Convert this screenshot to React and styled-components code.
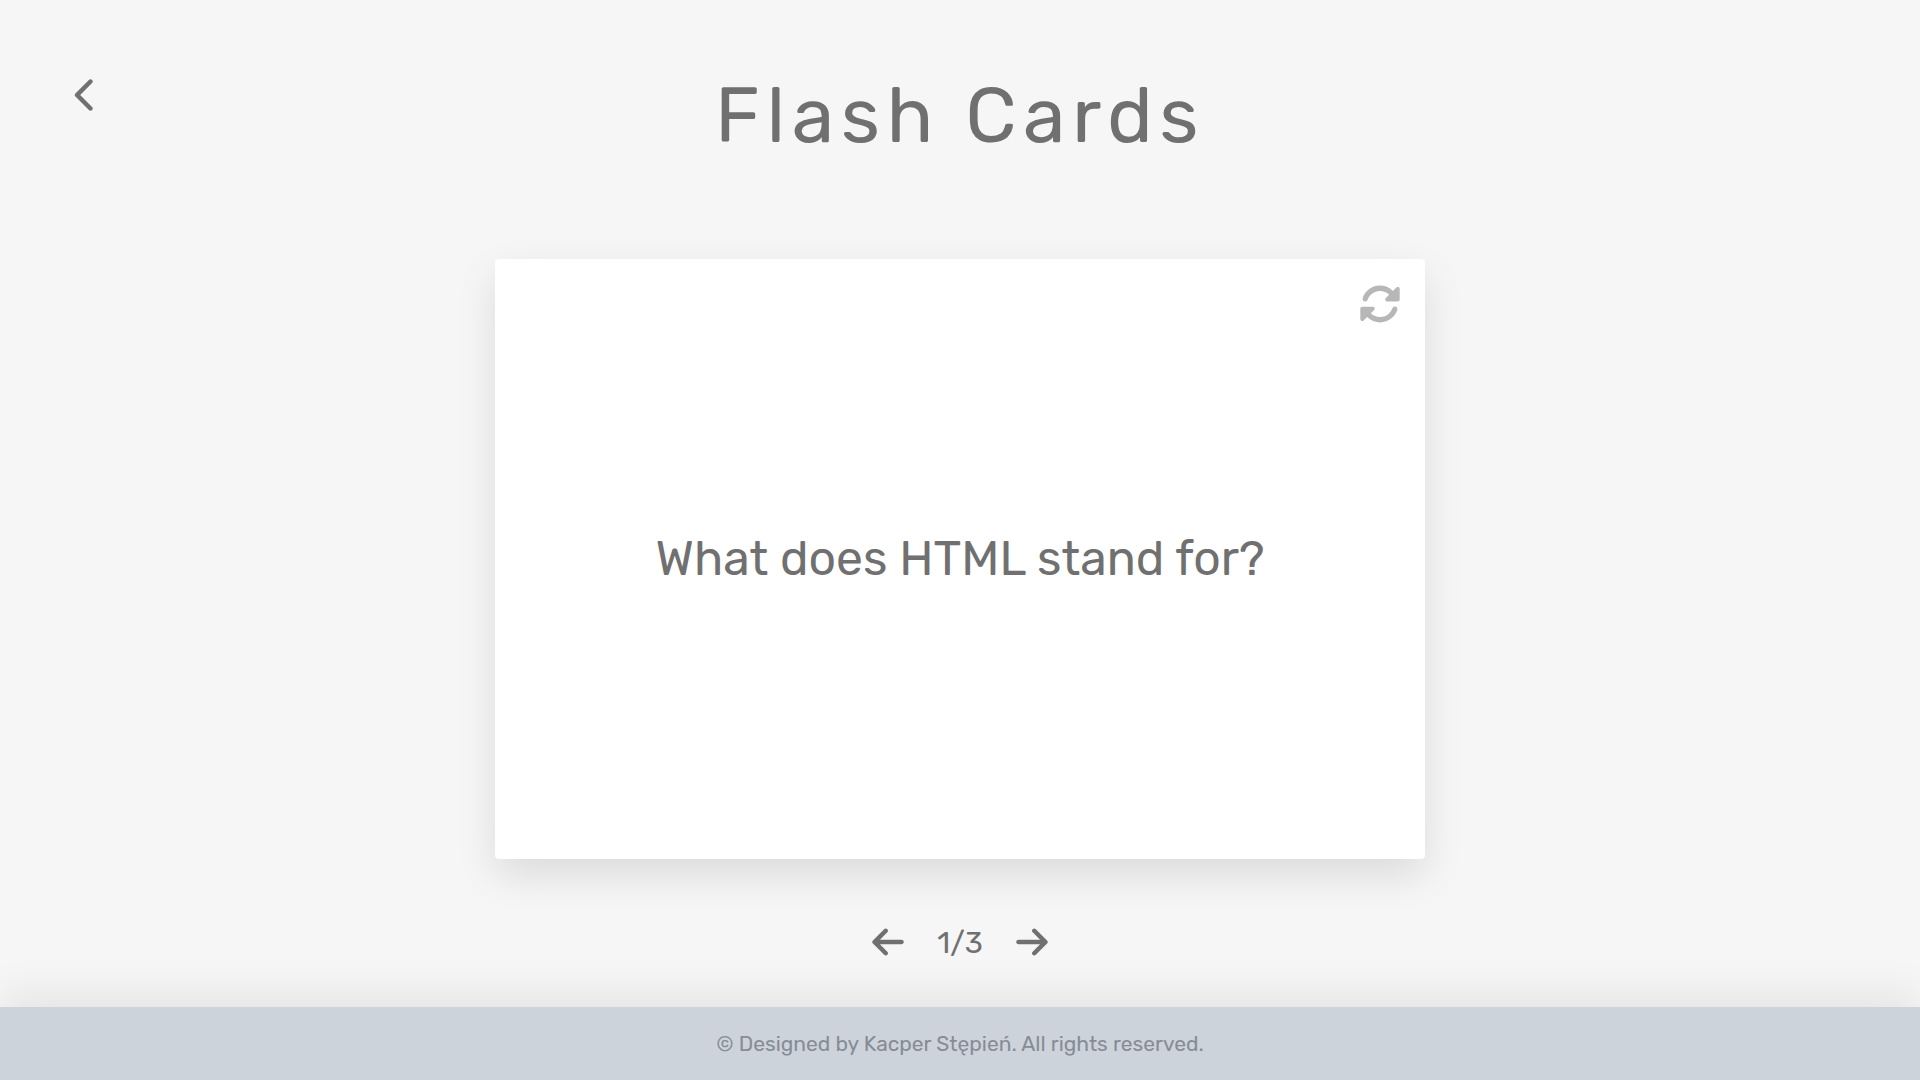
import React, { useState } from "react";
import styled, { createGlobalStyle } from "styled-components";
import { FaChevronLeft, FaArrowLeft, FaArrowRight, FaRotate } from "react-icons/fa6";

const GlobalStyle = createGlobalStyle`
  *, *::before, *::after { box-sizing: border-box; }
  body {
    margin: 0;
    background: #f6f6f6;
    color: #707070;
    font-family: Rubik, Inter, Roboto, sans-serif;
  }
`;

const Page = styled.div`
  display: flex;
  flex-direction: column;
  height: 100vh;
  overflow: hidden;
`;

const Header = styled.header`
  display: grid;
  grid-template-columns: 168px 1fr 168px;
  height: 259px;
  flex: none;
`;

const IconButton = styled.button`
  display: flex;
  align-items: center;
  justify-content: center;
  padding: 0;
  border: 0;
  background: none;
  color: ${({ $tone }) => $tone || "#707070"};
  font-size: ${({ $size }) => $size}px;
  cursor: pointer;
`;

const BackButton = styled(IconButton)`
  align-self: start;
  height: 40px;
  margin-top: 75.4px;
  padding-left: 4px;
`;

const Title = styled.h1`
  margin: 68px 0 0;
  font-size: 77px;
  font-weight: 400;
  line-height: 96px;
  letter-spacing: 6.5px;
  text-align: center;
  white-space: nowrap;
`;

const Main = styled.main`
  display: flex;
  flex: 1;
  flex-direction: column;
  align-items: center;
`;

const Card = styled.section`
  display: flex;
  flex-direction: column;
  width: 930px;
  height: 600px;
  border-radius: 4px;
  background: #fff;
  box-shadow: 0 16px 40px rgba(0, 0, 0, 0.11);
`;

const CardTools = styled.div`
  display: flex;
  justify-content: flex-end;
  height: 90px;
  padding: 25px 24px 25px 0;
`;

const Question = styled.p`
  display: flex;
  flex: 1;
  align-items: center;
  justify-content: center;
  margin: 0;
  padding-bottom: 92px;
  font-size: 48px;
  white-space: nowrap;
`;

const Pager = styled.nav`
  display: flex;
  align-items: center;
  gap: 30px;
  height: 40px;
  margin-top: 62.5px;
`;

const Count = styled.span`
  width: 48px;
  padding-top: 3px;
  font-size: 30px;
  text-align: center;
`;

const Footer = styled.footer`
  display: flex;
  flex: none;
  align-items: center;
  justify-content: center;
  height: 73px;
  background: #cdd3db;
  color: #868c95;
  font-size: 21px;
  box-shadow: 0 -12px 44px rgba(0, 0, 0, 0.08);
`;

const questions = ["What does HTML stand for?"];

export default function App() {
  const [index] = useState(0);
  return (
    <Page>
      <GlobalStyle />
      <Header>
        <BackButton $size={36} aria-label="Back"><FaChevronLeft /></BackButton>
        <Title>Flash Cards</Title>
      </Header>
      <Main>
        <Card>
          <CardTools>
            <IconButton $size={42} $tone="#b7b7b7" aria-label="Flip"><FaRotate /></IconButton>
          </CardTools>
          <Question>{questions[index]}</Question>
        </Card>
        <Pager>
          <IconButton $size={36} aria-label="Previous"><FaArrowLeft /></IconButton>
          <Count>{index + 1}/3</Count>
          <IconButton $size={36} aria-label="Next"><FaArrowRight /></IconButton>
        </Pager>
      </Main>
      <Footer>© Designed by Kacper Stępień. All rights reserved.</Footer>
    </Page>
  );
}
